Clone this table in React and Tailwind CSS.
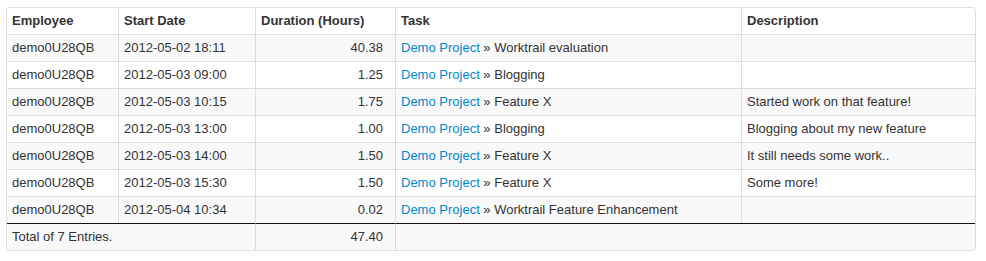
import React from "react";

const rows = [
  ["demo0U28QB", "2012-05-02 18:11", "40.38", "Worktrail evaluation", ""],
  ["demo0U28QB", "2012-05-03 09:00", "1.25", "Blogging", ""],
  ["demo0U28QB", "2012-05-03 10:15", "1.75", "Feature X", "Started work on that feature!"],
  ["demo0U28QB", "2012-05-03 13:00", "1.00", "Blogging", "Blogging about my new feature"],
  ["demo0U28QB", "2012-05-03 14:00", "1.50", "Feature X", "It still needs some work.."],
  ["demo0U28QB", "2012-05-03 15:30", "1.50", "Feature X", "Some more!"],
  ["demo0U28QB", "2012-05-04 10:34", "0.02", "Worktrail Feature Enhancement", ""],
];

export default function App() {
  return (
    <div className="bg-white w-[986px] h-[261px] pt-[7px] pl-[6px] font-['Liberation_Sans',Arial,sans-serif] text-[13px] leading-[18px] text-[#333333]">
      <div className="w-[970px] border border-[#dddddd] rounded-[4px] overflow-hidden">
        <table className="table-fixed border-separate border-spacing-0 w-[968px]">
          <thead>
            <tr>
              <th className="w-[111px] px-[5px] py-[4px] text-left font-bold align-bottom">Employee</th>
              <th className="w-[137px] px-[5px] py-[4px] text-left font-bold align-bottom border-l border-[#dddddd]">Start Date</th>
              <th className="w-[140px] px-[5px] py-[4px] text-left font-bold align-bottom border-l border-[#dddddd]">Duration (Hours)</th>
              <th className="w-[346px] px-[5px] py-[4px] text-left font-bold align-bottom border-l border-[#dddddd]">Task</th>
              <th className="w-[234px] px-[5px] py-[4px] text-left font-bold align-bottom border-l border-[#dddddd]">Description</th>
            </tr>
          </thead>
          <tbody>
            {rows.map((r, i) => (
              <tr key={i} className={i % 2 === 0 ? "bg-[#f9f9f9]" : "bg-white"}>
                <td className="px-[5px] py-[4px] border-t border-[#dddddd]">{r[0]}</td>
                <td className="px-[5px] py-[4px] border-t border-l border-[#dddddd]">{r[1]}</td>
                <td className="pl-[5px] pr-[12px] py-[4px] text-right border-t border-l border-[#dddddd]">{r[2]}</td>
                <td className="px-[5px] py-[4px] border-t border-l border-[#dddddd] whitespace-nowrap">
                  <a className="text-[#0088cc]" href="#">Demo Project</a> » {r[3]}
                </td>
                <td className="px-[5px] py-[4px] border-t border-l border-[#dddddd] whitespace-nowrap">{r[4]}</td>
              </tr>
            ))}
            <tr className="bg-[#f9f9f9]">
              <td colSpan={2} className="px-[5px] py-[4px] border-t border-t-[#111111]">Total of 7 Entries.</td>
              <td className="pl-[5px] pr-[12px] py-[4px] text-right border-t border-t-[#111111] border-l border-l-[#dddddd]">47.40</td>
              <td colSpan={2} className="px-[5px] py-[4px] border-t border-t-[#111111] border-l border-l-[#dddddd]">&nbsp;</td>
            </tr>
          </tbody>
        </table>
      </div>
    </div>
  );
}
